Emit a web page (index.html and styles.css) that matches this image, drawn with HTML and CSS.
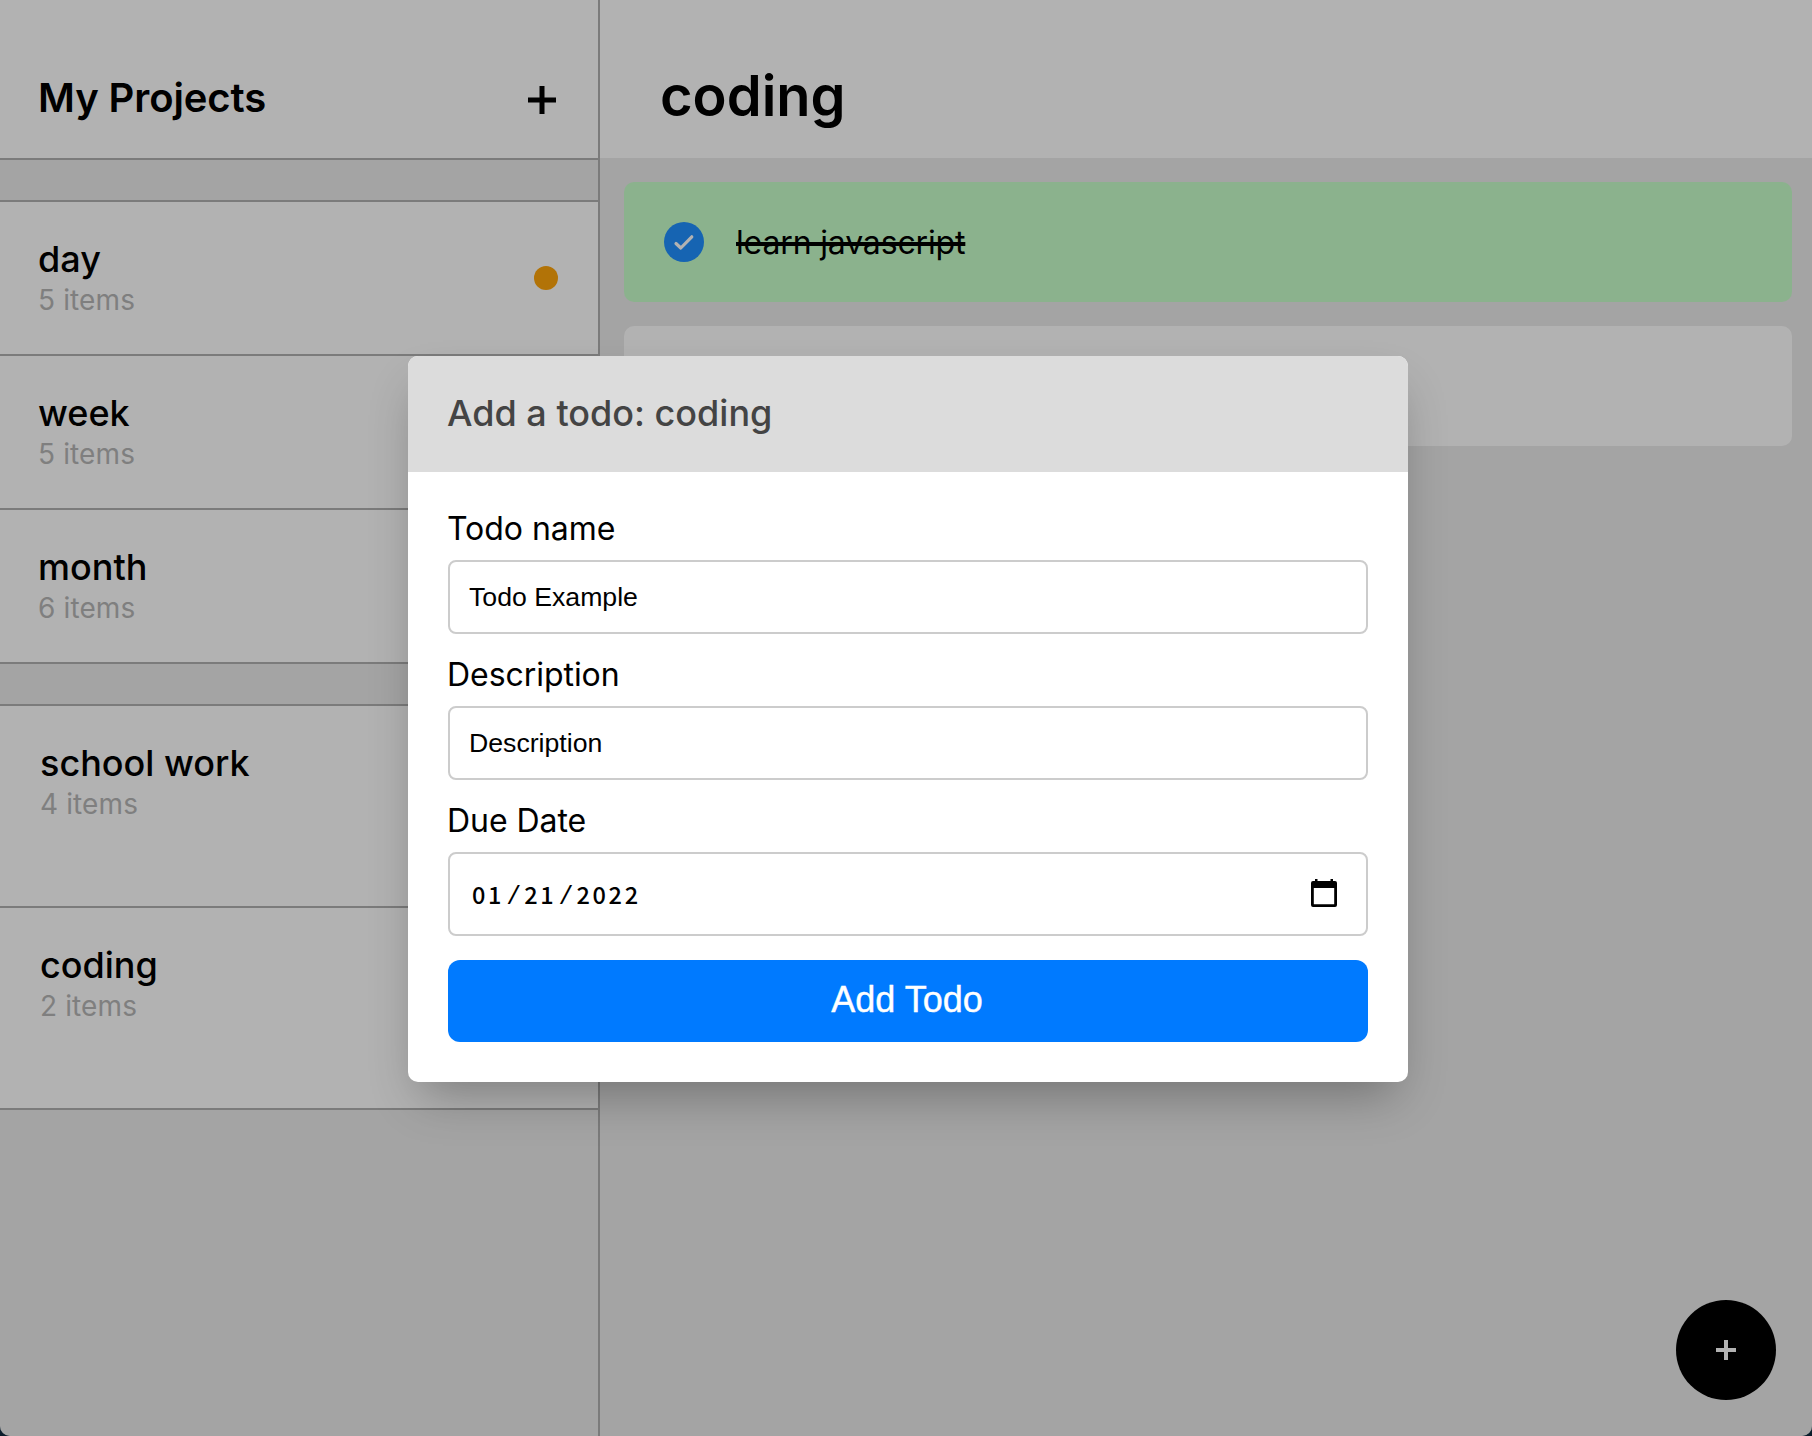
FILE: index.html
```html
<!DOCTYPE html>
<html lang="en">
<head>
<meta charset="utf-8">
<title>My Projects</title>
<link rel="stylesheet" href="styles.css">
</head>
<body>
<div class="app">
  <aside class="sidebar">
    <header class="sidebar-header">
      <h2 class="sidebar-title">My Projects</h2>
      <svg class="add-project" viewBox="0 0 28 28"><path d="M0 14H28M14 0V28" fill="none" stroke="#000" stroke-width="5"/></svg>
    </header>
    <div class="group">
      <div class="project"><div class="info"><div class="name">day</div><div class="count">5 items</div></div><span class="dot"></span></div>
      <div class="project"><div class="info"><div class="name">week</div><div class="count">5 items</div></div></div>
      <div class="project"><div class="info"><div class="name">month</div><div class="count">6 items</div></div></div>
    </div>
    <div class="group">
      <div class="project tall"><div class="info"><div class="name">school work</div><div class="count">4 items</div></div></div>
      <div class="project tall"><div class="info"><div class="name">coding</div><div class="count">2 items</div></div></div>
    </div>
  </aside>
  <main class="main">
    <header class="main-header"><h1 class="main-title">coding</h1></header>
    <div class="todos">
      <div class="todo done">
        <svg class="check" viewBox="0 0 40 40"><circle cx="20" cy="20" r="20" fill="#2090ff"/><path d="M12 21.5L16.8 26L27.8 14.8" fill="none" stroke="#fff" stroke-width="3.2" stroke-linecap="round" stroke-linejoin="round"/></svg>
        <span class="todo-text">learn javascript</span>
      </div>
      <div class="todo"></div>
    </div>
  </main>
  <button class="fab" aria-label="Add todo"><svg class="fab-icon" viewBox="0 0 20 20"><path d="M0 10H20M10 0V20" fill="none" stroke="#fff" stroke-width="4"/></svg></button>
</div>
<div class="overlay">
  <div class="modal">
    <div class="modal-header">Add a todo: coding</div>
    <form class="modal-body">
      <label class="label" for="name">Todo name</label>
      <input class="input" id="name" type="text" value="Todo Example">
      <label class="label" for="desc">Description</label>
      <input class="input" id="desc" type="text" value="Description">
      <div class="label">Due Date</div>
      <div class="input date">
        <div class="date-text">01<span class="slash">/</span>21<span class="slash">/</span>2022</div>
        <svg class="calendar" viewBox="0 0 26 28"><path d="M2 2H24Q26 2 26 4V26Q26 28 24 28H2Q0 28 0 26V4Q0 2 2 2ZM2.8 9V25.2H23.2V9Z" fill="#000" fill-rule="evenodd"/><path d="M4 0H6.5V3H4ZM19.5 0H22V3H19.5Z" fill="#000"/></svg>
      </div>
      <button class="submit" type="button">Add Todo</button>
    </form>
  </div>
</div>
</body>
</html>
```
FILE: styles.css
```css
* { box-sizing: border-box; }
body { margin: 0; background: #0b1d2b; font-family: Inter, "Liberation Sans", sans-serif; color: #000; }
h1, h2 { margin: 0; }

.app { display: flex; height: 1436px; background: #ebebeb; border-radius: 0 0 10px 10px; overflow: hidden; position: relative; }

.sidebar { width: 600px; border-right: 2px solid #b0b0b0; }
.sidebar-header { height: 160px; display: flex; justify-content: space-between; align-items: flex-start; padding: 73px 42.5px 0 38px; background: #fff; border-bottom: 2px solid #b0b0b0; }
.sidebar-title { font-size: 40px; line-height: 50px; font-weight: 600; letter-spacing: -0.1px; }
.add-project { width: 28px; height: 28px; margin-top: 13px; }
.group { margin-top: 40px; border-top: 2px solid #b0b0b0; }
.project { height: 154px; display: flex; justify-content: space-between; align-items: center; padding: 0 40px 0 38px; background: #fff; border-bottom: 2px solid #b0b0b0; }
.project.tall { height: 202px; align-items: flex-start; padding: 36px 40px 0; }
.name { margin-top: -1px; margin-bottom: 1px; font-size: 36px; line-height: 44px; font-weight: 500; }
.count { font-size: 28px; line-height: 36px; color: #b7b7b7; letter-spacing: 0.12px; }
.dot { width: 24px; height: 24px; border-radius: 50%; background: #ffa50b; }

.main { flex: 1; }
.main-header { height: 158px; padding: 61px 60px 0; background: #fff; }
.main-title { font-size: 56px; line-height: 70px; font-weight: 600; }
.todos { display: flex; flex-direction: column; gap: 24px; padding: 24px 20px 0 24px; }
.todo { height: 120px; display: flex; align-items: center; gap: 32px; padding: 0 40px; background: #fff; border-radius: 10px; }
.todo.done { background: #c8ffcb; }
.check { width: 40px; height: 40px; }
.todo-text { padding-top: 2px; font-size: 32px; line-height: 40px; letter-spacing: -0.15px; text-decoration: line-through; text-decoration-thickness: 4px; }

.fab { position: absolute; right: 36px; bottom: 36px; width: 100px; height: 100px; display: flex; align-items: center; justify-content: center; border: 0; padding: 0; border-radius: 50%; background: #000; }
.fab-icon { width: 20px; height: 20px; }

.overlay { position: absolute; inset: 0; height: 1436px; display: flex; align-items: center; justify-content: center; background: rgba(0, 0, 0, 0.3); border-radius: 0 0 10px 10px; }
.modal { width: 1000px; height: 726px; margin-left: 4px; margin-top: 2px; background: #fff; border-radius: 10px; box-shadow: 0 24px 46px -12px rgba(0, 0, 0, 0.3); }
.modal-header { height: 116px; padding: 34px 39px 0; background: #dcdcdc; border-radius: 10px 10px 0 0; color: #444; font-size: 36px; line-height: 46px; font-weight: 500; }
.modal-body { display: flex; flex-direction: column; padding: 37px 40px 40px; }
.label { height: 40px; margin: 0 0 11px -1px; font-size: 32px; line-height: 40px; letter-spacing: -0.05px; }
.input { height: 74px; margin-bottom: 21px; padding: 0 19px; border: 2px solid #ccc; border-radius: 8px; background: #fff; color: #000; font: 26.67px "Liberation Sans", Arial, sans-serif; }
.date { height: 84px; margin-bottom: 24px; display: flex; align-items: center; justify-content: space-between; padding: 0 29px 0 22px; }
.date-text { padding-top: 4px; font: 500 23.5px/34px "Noto Sans CJK JP", monospace; letter-spacing: 2.7px; }
.slash { display: inline-block; width: 20px; padding-right: 1px; text-align: center; letter-spacing: 0; font-family: "Liberation Mono", monospace; font-size: 25px; }
.calendar { width: 26px; height: 28px; margin-top: -3px; }
.submit { height: 82px; border: 0; border-radius: 12px; padding: 0 2px 2px 0; background: #007aff; color: #fff; font: 36px "Liberation Sans", Arial, sans-serif; -webkit-text-stroke: 0.4px #fff; }
```
